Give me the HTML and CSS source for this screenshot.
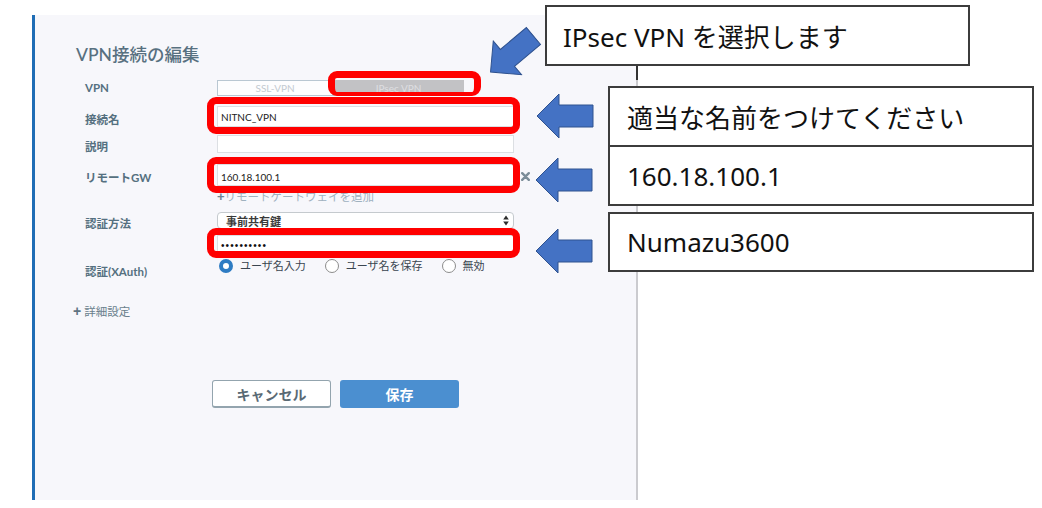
FILE: index.html
```html
<!DOCTYPE html>
<html lang="ja">
<head>
<meta charset="utf-8">
<title>VPN接続の編集</title>
<link rel="stylesheet" href="styles.css">
</head>
<body>
<div class="page">
  <section class="panel">
    <h1 class="title">VPN接続の編集</h1>
    <div class="form">
      <div class="row row-vpn">
        <span class="label">VPN</span>
        <div class="tabs">
          <span class="tab">SSL-VPN</span>
          <span class="tab tab-active">IPsec VPN</span>
        </div>
      </div>
      <div class="row row-name">
        <span class="label">接続名</span>
        <div class="field field-name">NITNC_VPN</div>
      </div>
      <div class="row row-desc">
        <span class="label">説明</span>
        <div class="field field-desc"></div>
      </div>
      <div class="row row-gw">
        <span class="label">リモートGW</span>
        <div class="field field-gw">160.18.100.1</div>
        <svg class="remove" width="9" height="9" viewBox="0 0 9 9"><path d="M1.2 1.2 L7.8 7.8 M7.8 1.2 L1.2 7.8" stroke="#7b8c98" stroke-width="2.4" stroke-linecap="round"/></svg>
      </div>
      <div class="row row-add">
        <span class="add"><span class="add-plus">+</span>リモートゲートウェイを追加</span>
      </div>
      <div class="row row-auth">
        <span class="label">認証方法</span>
        <div class="select">
          <span>事前共有鍵</span>
          <svg width="6" height="11" viewBox="0 0 6 11"><path d="M3 0.5 L5.8 4.5 L0.2 4.5 Z M3 10.5 L5.8 6.5 L0.2 6.5 Z" fill="#2c2c2c"/></svg>
        </div>
      </div>
      <div class="row row-pass">
        <div class="field field-pass"><span class="dots">••••••••••</span></div>
      </div>
      <div class="row row-xauth">
        <span class="label">認証(XAuth)</span>
        <div class="radios">
          <span class="option"><span class="radio radio-on"></span>ユーザ名入力</span>
          <span class="option"><span class="radio"></span>ユーザ名を保存</span>
          <span class="option"><span class="radio"></span>無効</span>
        </div>
      </div>
    </div>
    <div class="advanced"><span class="adv-plus">+</span>詳細設定</div>
    <div class="buttons">
      <button class="btn btn-cancel">キャンセル</button>
      <button class="btn btn-save">保存</button>
    </div>
  </section>

  <div class="mark mark-tab"></div>
  <div class="mark mark-name"></div>
  <div class="mark mark-gw"></div>
  <div class="mark mark-pass"></div>

  <svg class="arrow arrow-tab" width="58" height="46" viewBox="0 0 58 46"><polygon points="1,23 23,1 23,12 57,12 57,34 23,34 23,45" fill="#4472c4" stroke="#2f528f" stroke-width="1"/></svg>
  <svg class="arrow arrow-name" width="58" height="46" viewBox="0 0 58 46"><polygon points="1,23 23,1 23,12 57,12 57,34 23,34 23,45" fill="#4472c4" stroke="#2f528f" stroke-width="1"/></svg>
  <svg class="arrow arrow-gw" width="58" height="46" viewBox="0 0 58 46"><polygon points="1,23 23,1 23,12 57,12 57,34 23,34 23,45" fill="#4472c4" stroke="#2f528f" stroke-width="1"/></svg>
  <svg class="arrow arrow-pass" width="58" height="46" viewBox="0 0 58 46"><polygon points="1,23 23,1 23,12 57,12 57,34 23,34 23,45" fill="#4472c4" stroke="#2f528f" stroke-width="1"/></svg>

  <div class="callout callout-tab">IPsec VPN を選択します</div>
  <div class="callout-stack">
    <div class="callout-box">適当な名前をつけてください</div>
    <div class="callout-box callout-joined">160.18.100.1</div>
    <div class="callout-box callout-gap">Numazu3600</div>
  </div>
</div>
</body>
</html>
```

FILE: styles.css
```css
* { box-sizing: border-box; }

body {
  margin: 0;
  background: #ffffff;
  font-family: Lato, "Noto Sans CJK JP", sans-serif;
}

.page {
  position: relative;
  width: 1042px;
  height: 508px;
  padding: 15px 0 0 32px;
  overflow: hidden;
}

/* ---------- panel ---------- */
.panel {
  position: relative;
  width: 606px;
  height: 485px;
  background: #f7f7fb;
  border-left: 3px solid #1f6db5;
  border-right: 2px solid #cbcbcf;
  padding: 29px 0 0 38px;
}

.panel::after {
  content: "";
  position: absolute;
  right: -2px;
  top: 50px;
  width: 2px;
  height: 15px;
  background: #333333;
}

.title {
  margin: 0 0 0 3px;
  font-size: 17.5px;
  line-height: 22px;
  font-weight: 500;
  color: #587080;
}

.form {
  margin: 14px 0 0 12px;
}

.row {
  display: grid;
  grid-template-columns: 132px 297px auto;
  align-items: center;
}

.label {
  grid-column: 1;
  font-size: 11.5px;
  line-height: 14px;
  height: 14px;
  font-weight: 700;
  color: #557080;
  margin: 3px 0 -3px;
}

.row-vpn .label { margin: 0; }

.row-vpn { height: 16px; }
.row-name { margin-top: 10px; }
.row-desc { margin-top: 8px; }
.row-gw { margin-top: 11px; }
.row-add { margin-top: 4px; height: 14px; }
.row-auth { margin-top: 8px; }
.row-pass { margin-top: 6px; }
.row-xauth { margin-top: 6px; align-items: start; }
.row-xauth .label { margin: 7px 0 0; }

/* tabs */
.tabs {
  grid-column: 2;
  display: flex;
  height: 16px;
}

.tab {
  width: 116px;
  border: 1px solid #b9c7d2;
  background: #fdfdfe;
  color: #c3cad1;
  font-size: 10px;
  line-height: 14px;
  text-align: center;
}

.tab-active {
  width: 131px;
  background: #c2c2c5;
  border-color: #c2c2c5;
  color: #dedee1;
}

/* fields */
.field {
  grid-column: 2;
  background: #ffffff;
  border: 1px solid #dcdfe3;
  padding-left: 3px;
  display: flex;
  align-items: center;
  font-size: 10px;
  color: #222222;
}

.field-name { height: 21px; }
.field-desc { height: 18px; }
.field-gw { height: 22px; padding-top: 3px; }
.field-pass { height: 17px; padding-top: 4px; }

.dots {
  font-family: "Liberation Sans", sans-serif;
  font-size: 10px;
  line-height: 10px;
  letter-spacing: 1.1px;
  color: #111111;
}

.remove {
  grid-column: 3;
  margin-left: 7px;
  margin-top: 3px;
}

.add {
  grid-column: 2;
  font-size: 11.5px;
  line-height: 14px;
  height: 14px;
  color: #9fb1bf;
}

.add-plus {
  color: #6d8393;
  font-weight: 900;
  font-family: "Liberation Sans", sans-serif;
  font-size: 13px;
  line-height: 14px;
}

.select {
  grid-column: 2;
  height: 17px;
  border: 1px solid #c5cace;
  border-radius: 4px;
  background: #ffffff;
  display: flex;
  align-items: center;
  justify-content: space-between;
  padding: 0 4px 0 8px;
  font-size: 11px;
  font-weight: 700;
  color: #3a3a3a;
}

/* radios */
.radios {
  grid-column: 2 / span 2;
  display: flex;
  align-items: center;
  height: 16px;
  padding-left: 2px;
  gap: 19px;
}

.option {
  display: flex;
  align-items: center;
  gap: 7px;
  font-size: 11px;
  line-height: 14px;
  color: #3a4550;
}

.radio {
  width: 14px;
  height: 14px;
  border-radius: 50%;
  border: 1px solid #8c8c8c;
  background: #ffffff;
}

.radio-on {
  border: 4px solid #2e7cc3;
}

/* advanced */
.advanced {
  margin-top: 25px;
  font-size: 11.5px;
  line-height: 14px;
  height: 14px;
  color: #6a7f8c;
}

.adv-plus {
  font-family: "Liberation Sans", sans-serif;
  font-weight: 900;
  font-size: 14px;
  line-height: 14px;
  color: #5f7482;
  margin-right: 3px;
}

/* buttons */
.buttons {
  display: flex;
  gap: 9px;
  margin: 62px 0 0 139px;
}

.btn {
  width: 119px;
  height: 28px;
  border-radius: 3px;
  font-family: Lato, "Noto Sans CJK JP", sans-serif;
  font-size: 14px;
  font-weight: 700;
  display: flex;
  align-items: center;
  justify-content: center;
  padding: 0;
}

.btn-cancel {
  background: #ffffff;
  border: 1px solid #93a4ae;
  border-bottom-width: 2px;
  color: #5a6a75;
}

.btn-save {
  background: #4b8fd0;
  border: none;
  color: #ffffff;
}

/* ---------- annotation overlays ---------- */
.mark {
  position: absolute;
  border: 7px solid #ff0000;
  border-radius: 9px;
}

.mark-tab { left: 328px; top: 71px; width: 153px; height: 25px; border-bottom-width: 4px; }
.mark-name { left: 207px; top: 97px; width: 313px; height: 37px; }
.mark-gw { left: 207px; top: 157px; width: 313px; height: 36px; }
.mark-pass { left: 207px; top: 228px; width: 313px; height: 30px; }

.arrow { position: absolute; }
.arrow-tab { left: 483px; top: 31px; transform: rotate(-40deg); }
.arrow-name { left: 536px; top: 93px; }
.arrow-gw { left: 535px; top: 157px; }
.arrow-pass { left: 535px; top: 228px; }

.callout,
.callout-box {
  background: #ffffff;
  border: 2px solid #3c3c3c;
  font-family: "Noto Sans", "Noto Sans CJK JP", sans-serif;
  font-size: 26px;
  color: #111111;
  display: flex;
  align-items: center;
  white-space: nowrap;
}

.callout {
  position: absolute;
  left: 545px;
  top: 5px;
  width: 425px;
  height: 61px;
  padding-left: 16px;
}

.callout-stack {
  position: absolute;
  left: 608px;
  top: 86px;
  width: 426px;
}

.callout-box {
  height: 61px;
  padding-left: 17px;
}

.callout-joined { margin-top: -2px; }
.callout-gap { margin-top: 6px; height: 60px; }
```
